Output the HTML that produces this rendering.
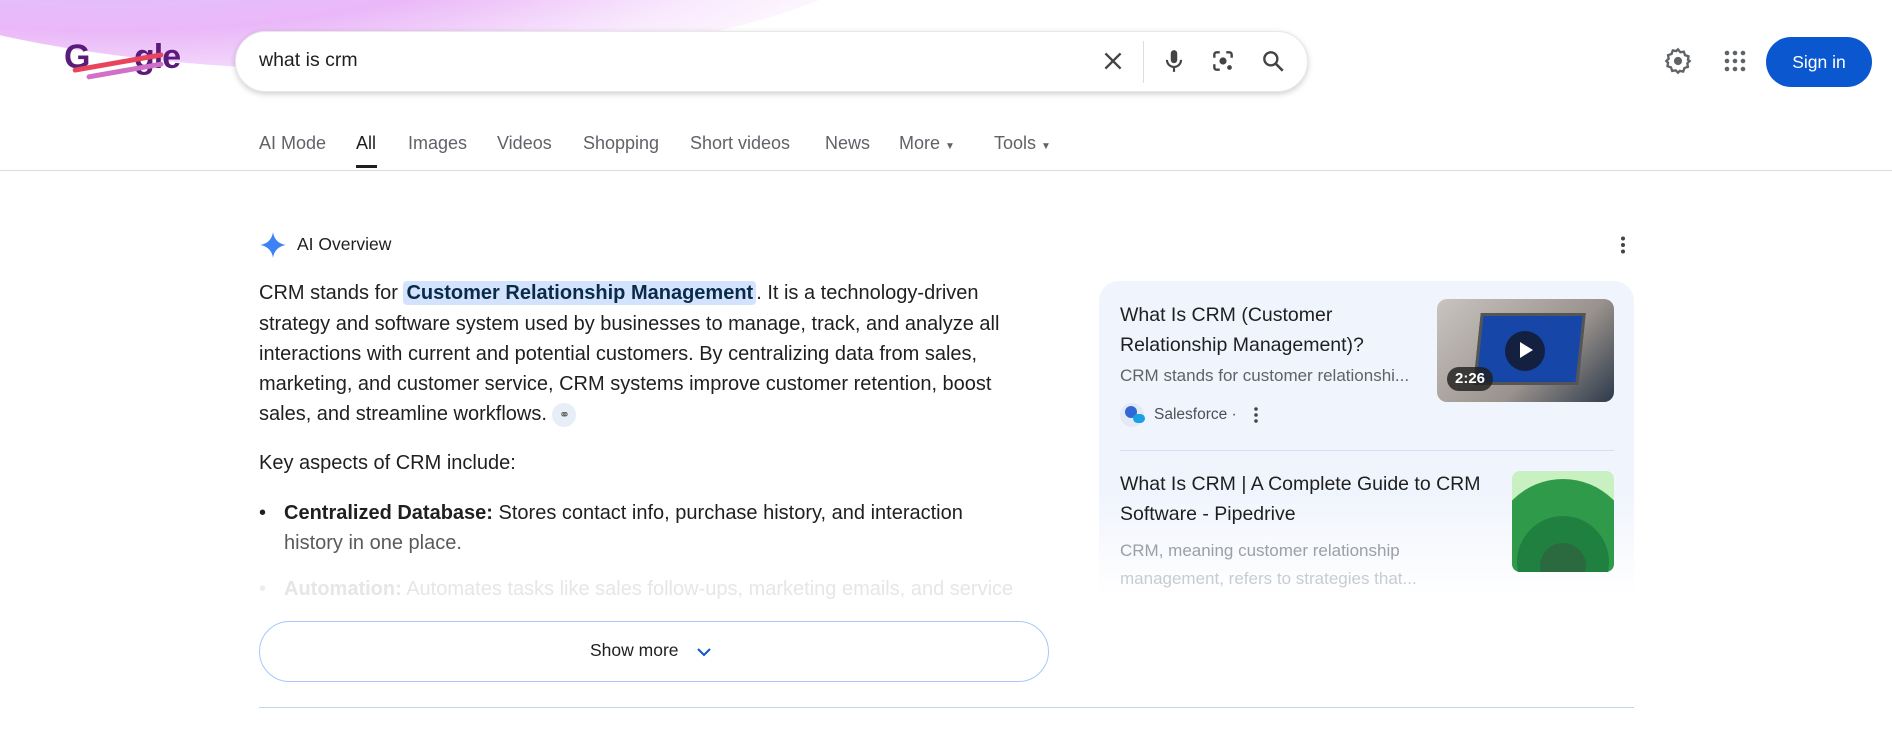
<!DOCTYPE html>
<html><head><meta charset="utf-8"><style>
*{margin:0;padding:0;box-sizing:border-box}
body{width:1892px;height:746px;overflow:hidden;background:#fff;font-family:"Liberation Sans",Arial,sans-serif;color:#1f1f1f;position:relative}
.a{position:absolute;white-space:nowrap}
.glow{position:absolute;left:-250px;top:-300px;width:1200px;height:370px;border-radius:50%;background:radial-gradient(ellipse at 30% 60%,#d8c8ff 0%,#eab8f8 35%,rgba(245,220,252,.6) 55%,rgba(255,255,255,0) 72%);}
.tab{position:absolute;top:133px;font-size:18px;color:#5f6368}
.p{position:absolute;left:259px;font-size:20px;line-height:30px;color:#1f1f1f;white-space:nowrap}
</style></head><body>
<div class="glow"></div>
<div class="a" style="left:64px;top:38px;font-size:34px;font-weight:bold;color:#5a1b7a;letter-spacing:-1px">G</div>
<div class="a" style="left:134px;top:38px;font-size:34px;font-weight:bold;color:#5a1b7a;letter-spacing:-1px">gle</div>
<div class="a" style="left:72px;top:60px;width:92px;height:5px;background:#e8445c;transform:rotate(-10deg);border-radius:3px"></div>
<div class="a" style="left:86px;top:68px;width:78px;height:5px;background:#d070c8;transform:rotate(-10deg);border-radius:3px"></div>

<div class="a" style="left:235px;top:31px;width:1073px;height:61px;border-radius:31px;background:#fff;box-shadow:0 2px 6px rgba(32,33,36,.22);border:1px solid #e8e8e8"></div>
<div class="a" style="left:259px;top:49px;font-size:19.5px;color:#1f1f1f">what is crm</div>
<svg class="a" style="left:1100px;top:48px" width="26" height="26" viewBox="0 0 24 24"><path d="M5 5L19 19M19 5L5 19" stroke="#444" stroke-width="2.2"/></svg>
<div class="a" style="left:1143px;top:41px;width:1px;height:42px;background:#ddd"></div>
<svg class="a" style="left:1161px;top:47px" width="26" height="28" viewBox="0 0 24 24"><rect x="9" y="2" width="6" height="12" rx="3" fill="#444"/><path d="M5.5 11a6.5 6.5 0 0 0 13 0M12 17.5V22" stroke="#444" stroke-width="2" fill="none"/></svg>
<svg class="a" style="left:1210px;top:48px" width="26" height="26" viewBox="0 0 24 24"><path d="M4 9V6a2 2 0 0 1 2-2h3M15 4h3a2 2 0 0 1 2 2v3M4 15v3a2 2 0 0 0 2 2h3M20 15" stroke="#444" stroke-width="2.2" fill="none"/><circle cx="12" cy="12" r="3.3" fill="#444"/><circle cx="18" cy="18" r="2.2" fill="#444"/></svg>
<svg class="a" style="left:1260px;top:48px" width="26" height="26" viewBox="0 0 24 24"><circle cx="10" cy="10" r="6" stroke="#444" stroke-width="2.2" fill="none"/><path d="M14.5 14.5L21 21" stroke="#444" stroke-width="2.4"/></svg>

<svg class="a" style="left:1664px;top:47px" width="28" height="28" viewBox="0 0 24 24"><path d="M12 2l2 2.5 3-.5 1 3 3 1-.5 3L22 12l-2 2 .5 3-3 1-1 3-3-.5L12 22l-2-2-3 .5-1-3-3-1 .5-3L2 12l2-2-.5-3 3-1 1-3 3 .5z" fill="none" stroke="#5f6368" stroke-width="2"/><circle cx="12" cy="12" r="3.5" fill="#5f6368"/></svg>
<svg class="a" style="left:1724px;top:50px" width="22" height="22" viewBox="0 0 22 22" fill="#5f6368"><circle cx="3" cy="3" r="2.3"/><circle cx="11" cy="3" r="2.3"/><circle cx="19" cy="3" r="2.3"/><circle cx="3" cy="11" r="2.3"/><circle cx="11" cy="11" r="2.3"/><circle cx="19" cy="11" r="2.3"/><circle cx="3" cy="19" r="2.3"/><circle cx="11" cy="19" r="2.3"/><circle cx="19" cy="19" r="2.3"/></svg>
<div class="a" style="left:1766px;top:37px;width:106px;height:50px;border-radius:25px;background:#0b57d0;color:#fff;font-size:17.5px;text-align:center;line-height:50px">Sign in</div>

<div class="tab" style="left:259px">AI Mode</div>
<div class="tab" style="left:356px;color:#1f1f1f">All</div>
<div class="a" style="left:356px;top:165px;width:21px;height:3px;background:#1f1f1f"></div>
<div class="tab" style="left:408px">Images</div>
<div class="tab" style="left:497px">Videos</div>
<div class="tab" style="left:583px">Shopping</div>
<div class="tab" style="left:690px">Short videos</div>
<div class="tab" style="left:825px">News</div>
<div class="tab" style="left:899px">More <span style="font-size:10px">▼</span></div>
<div class="tab" style="left:994px">Tools <span style="font-size:10px">▼</span></div>
<div class="a" style="left:0;top:170px;width:1892px;height:1px;background:#dadce0"></div>

<svg class="a" style="left:259px;top:231px" width="28" height="28" viewBox="0 0 24 24"><path d="M12 1C12.8 7 17 11.2 23 12 17 12.8 12.8 17 12 23 11.2 17 7 12.8 1 12 7 11.2 11.2 7 12 1z" fill="#3b82f6"/></svg>
<div class="a" style="left:297px;top:234px;font-size:17.5px;color:#1f1f1f">AI Overview</div>
<svg class="a" style="left:1614px;top:235px" width="18" height="20" viewBox="0 0 18 20" fill="#444"><circle cx="9" cy="3.5" r="2"/><circle cx="9" cy="10" r="2"/><circle cx="9" cy="16.5" r="2"/></svg>

<div class="p" style="top:278px">CRM stands for <span style="background:#d3e3fd;border-radius:4px;padding:1px 3px;font-weight:bold;color:#0a2a4a">Customer Relationship Management</span>. It is a technology-driven</div>
<div class="p" style="top:309px">strategy and software system used by businesses to manage, track, and analyze all</div>
<div class="p" style="top:339px">interactions with current and potential customers. By centralizing data from sales,</div>
<div class="p" style="top:369px">marketing, and customer service, CRM systems improve customer retention, boost</div>
<div class="p" style="top:399px">sales, and streamline workflows. <span style="display:inline-block;width:24px;height:24px;border-radius:12px;background:#e8eef8;vertical-align:middle;text-align:center;line-height:24px;font-size:13px;color:#555">⚭</span></div>
<div class="p" style="top:448px">Key aspects of CRM include:</div>
<div class="p" style="top:498px;left:259px">•</div>
<div class="p" style="top:498px;left:284px"><b>Centralized Database:</b> Stores contact info, purchase history, and interaction</div>
<div class="p" style="top:528px;left:284px;color:#5a5a5a">history in one place.</div>
<div class="p" style="top:574px;left:259px;color:#ececec">•</div>
<div class="p" style="top:574px;left:284px;color:#e6e6e6"><b>Automation:</b> Automates tasks like sales follow-ups, marketing emails, and service</div>
<div class="a" style="left:259px;top:621px;width:790px;height:61px;border-radius:31px;border:1px solid #a8c7fa;background:#fff"></div>
<div class="a" style="left:590px;top:640px;font-size:17.5px;color:#1f1f1f">Show more</div>
<svg class="a" style="left:694px;top:642px" width="20" height="20" viewBox="0 0 20 20"><path d="M4 7l6 6 6-6" stroke="#0b57d0" stroke-width="2" fill="none"/></svg>
<div class="a" style="left:259px;top:707px;width:1375px;height:1px;background:#c0d4f0"></div>

<div class="a" style="left:1099px;top:281px;width:535px;height:350px;border-radius:20px;background:linear-gradient(#f0f4fd 0%,#f0f4fd 60%,rgba(255,255,255,1) 90%)"></div>
<div class="a" style="left:1120px;top:300px;font-size:19.5px;line-height:30px;color:#1f1f1f">What Is CRM (Customer<br>Relationship Management)?</div>
<div class="a" style="left:1120px;top:366px;font-size:17px;color:#5f6368">CRM stands for customer relationshi...</div>
<div class="a" style="left:1120px;top:403px;width:24px;height:24px;border-radius:12px;background:#e3e9f5"></div>
<div class="a" style="left:1125px;top:406px;width:12px;height:12px;border-radius:6px;background:#3367d6"></div>
<div class="a" style="left:1133px;top:414px;width:12px;height:9px;border-radius:5px;background:#1ba1e2"></div>
<div class="a" style="left:1154px;top:406px;font-size:15.5px;color:#4d5156">Salesforce ·</div>
<svg class="a" style="left:1249px;top:405px" width="14" height="20" viewBox="0 0 14 20" fill="#444"><circle cx="7" cy="4" r="1.8"/><circle cx="7" cy="10" r="1.8"/><circle cx="7" cy="16" r="1.8"/></svg>
<div class="a" style="left:1437px;top:299px;width:177px;height:103px;border-radius:10px;overflow:hidden;background:linear-gradient(135deg,#c9c4c0,#9a928c 60%,#2c3a4a)">
 <div style="position:absolute;left:40px;top:14px;width:105px;height:72px;background:#1646a8;transform:skewX(-6deg);border:3px solid #555"></div>
 <div style="position:absolute;left:68px;top:32px;width:40px;height:40px;border-radius:20px;background:rgba(20,20,30,.75)"></div>
 <div style="position:absolute;left:83px;top:43px;width:0;height:0;border-left:13px solid #fff;border-top:8px solid transparent;border-bottom:8px solid transparent"></div>
 <div style="position:absolute;left:10px;top:68px;width:46px;height:24px;border-radius:12px;background:rgba(30,30,30,.8);color:#fff;font-size:15px;font-weight:bold;text-align:center;line-height:24px">2:26</div>
</div>
<div class="a" style="left:1120px;top:450px;width:494px;height:1px;background:#d3e0f3"></div>
<div class="a" style="left:1120px;top:469px;font-size:19.5px;line-height:30px;color:#1f1f1f">What Is CRM | A Complete Guide to CRM<br>Software - Pipedrive</div>
<div class="a" style="left:1120px;top:537px;font-size:17px;line-height:28px;color:#9aa0a6">CRM, meaning customer relationship<br><span style="color:#c8ccd0">management, refers to strategies that...</span></div>
<div class="a" style="left:1512px;top:471px;width:102px;height:101px;border-radius:8px;overflow:hidden;background:#c8f0c0">
 <div style="position:absolute;left:-20px;top:8px;width:142px;height:142px;border-radius:50%;background:#2e9a4a"></div>
 <div style="position:absolute;left:5px;top:45px;width:92px;height:92px;border-radius:50%;background:#208040"></div>
 <div style="position:absolute;left:28px;top:72px;width:46px;height:46px;border-radius:50%;background:#2a6a3e"></div>
</div>
</body></html>
